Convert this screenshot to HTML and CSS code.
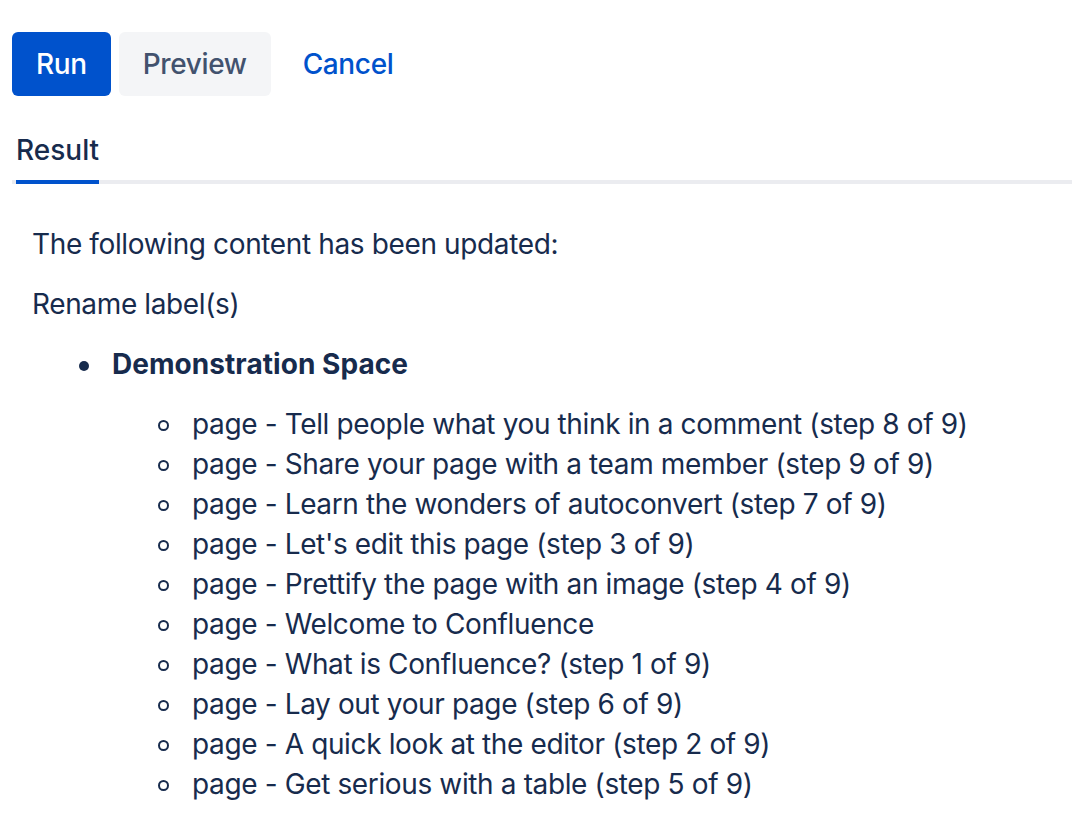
FILE: index.html
```html
<!DOCTYPE html>
<html>
<head>
<meta charset="utf-8">
<link rel="stylesheet" href="styles.css">
</head>
<body>
<div class="page">
  <div class="actions">
    <button class="btn btn-primary">Run</button>
    <button class="btn btn-default">Preview</button>
    <button class="btn btn-link">Cancel</button>
  </div>
  <div class="tabs">
    <div class="tab tab-active">Result</div>
  </div>
  <div class="result">
    <p>The following content has been updated:</p>
    <p>Rename label(s)</p>
    <ul class="spaces">
      <li><strong>Demonstration Space</strong>
        <ul class="pages">
          <li>page - Tell people what you think in a comment (step 8 of 9)</li>
          <li>page - Share your page with a team member (step 9 of 9)</li>
          <li>page - Learn the wonders of autoconvert (step 7 of 9)</li>
          <li>page - Let's edit this page (step 3 of 9)</li>
          <li>page - Prettify the page with an image (step 4 of 9)</li>
          <li>page - Welcome to Confluence</li>
          <li>page - What is Confluence? (step 1 of 9)</li>
          <li>page - Lay out your page (step 6 of 9)</li>
          <li>page - A quick look at the editor (step 2 of 9)</li>
          <li>page - Get serious with a table (step 5 of 9)</li>
        </ul>
      </li>
    </ul>
  </div>
</div>
</body>
</html>
```
FILE: styles.css
```css
html, body {
  margin: 0;
  padding: 0;
  background: #ffffff;
}
body {
  font-family: Inter, "Noto Sans", "Liberation Sans", sans-serif;
  font-size: 28px;
  line-height: 40px;
  letter-spacing: -0.37px;
  color: #172B4D;
}
.page {
  padding: 32px 0 0 12px;
}
.actions {
  display: flex;
  gap: 8px;
  height: 64px;
}
.btn {
  font-family: inherit;
  font-size: 28px;
  font-weight: 500;
  letter-spacing: -0.37px;
  height: 64px;
  padding: 0 24px;
  border: none;
  border-radius: 6px;
  cursor: pointer;
}
.btn-primary {
  background: #0052CC;
  color: #ffffff;
}
.btn-default {
  background: #F4F5F7;
  color: #42526E;
}
.btn-link {
  background: transparent;
  color: #0052CC;
}
.tabs {
  margin-top: 34px;
  display: flex;
  border-bottom: 4px solid #EBECF0;
}
.tab {
  margin-left: 4px;
  padding-bottom: 10px;
  font-weight: 500;
  letter-spacing: 0;
  position: relative;
}
.tab-active::after {
  content: "";
  position: absolute;
  left: 0;
  right: 0;
  bottom: -4px;
  height: 4px;
  background: #0052CC;
}
.result {
  padding: 40px 0 0 20px;
}
.result p {
  margin: 0 0 20px;
}
.result ul {
  margin: 0;
  padding-left: 80px;
  list-style: none;
}
.spaces strong {
  font-weight: 700;
  letter-spacing: 0.05px;
}
.spaces > li::before {
  content: "";
  display: inline-block;
  width: 10px;
  height: 10px;
  border-radius: 50%;
  background: #172B4D;
  margin-left: -33px;
  margin-right: 23px;
  vertical-align: 3px;
}
.pages {
  margin-top: 20px !important;
}
.pages > li::before {
  content: "";
  display: inline-block;
  box-sizing: border-box;
  width: 11px;
  height: 11px;
  border-radius: 50%;
  border: 2px solid #172B4D;
  margin-left: -34px;
  margin-right: 23px;
  vertical-align: 3px;
}
```
